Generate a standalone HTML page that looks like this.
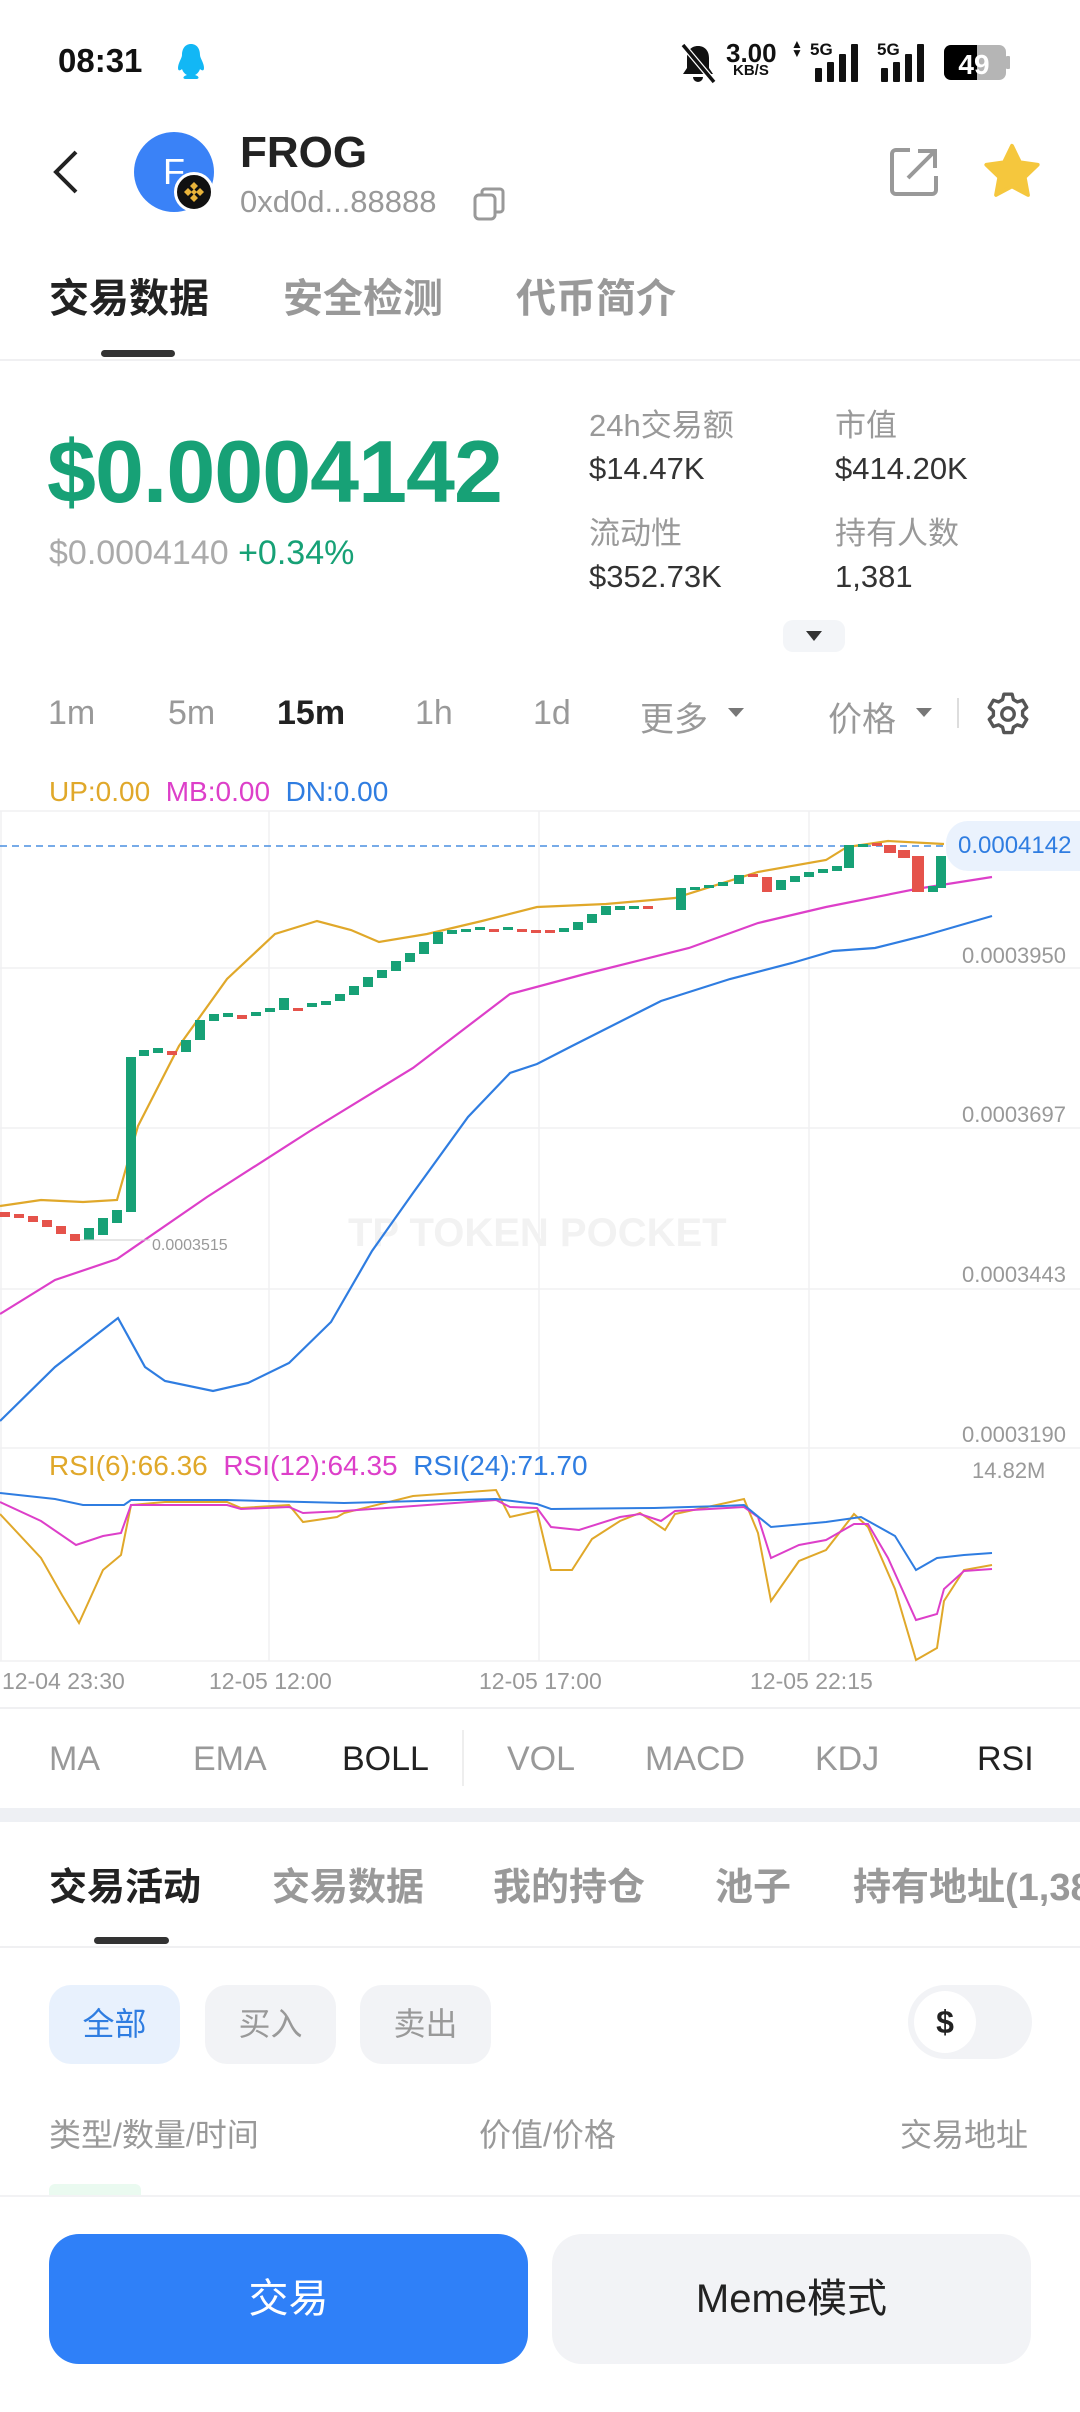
<!DOCTYPE html>
<html><head><meta charset="utf-8">
<style>
*{margin:0;padding:0;box-sizing:border-box}
body{width:1080px;height:2412px;background:#fff;position:relative;overflow:hidden;font-family:"Liberation Sans","Noto Sans CJK SC",sans-serif;color:#222}
.a{position:absolute;white-space:nowrap}
.lbl{color:#999;font-size:31px}
.val{color:#333;font-size:31px}
.iv{font-size:34px;color:#999;top:694px}
.ind{font-size:34px;color:#999;top:1740px}
.st{font-size:38px;font-weight:bold;color:#999;top:1856px}
.chip{position:absolute;top:1985px;height:79px;width:131px;border-radius:22px;background:#f2f3f6;color:#999;font-size:32px;text-align:center;line-height:79px}
.ax{font-size:22px;fill:#999;color:#999;font-family:"Liberation Sans",sans-serif}
</style></head><body>

<!-- status bar -->
<div class="a" style="left:58px;top:42px;font-size:33px;font-weight:bold;color:#111">08:31</div>
<svg class="a" style="left:176px;top:42px" width="30" height="40" viewBox="0 0 30 40"><path d="M15 2c-6 0-9 5-9 11 0 3-4 8-4 13 0 3 2 3 4 1 1 3 3 5 5 6-4 1-5 4-1 4h10c4 0 3-3-1-4 2-1 4-3 5-6 2 2 4 2 4-1 0-5-4-10-4-13 0-6-3-11-9-11z" fill="#12b7f5"/></svg>
<svg class="a" style="left:678px;top:42px" width="40" height="42" viewBox="0 0 40 42"><path d="M20 4c-7 0-11 5-11 12v10l-4 6h30l-4-6V16c0-7-4-12-11-12z M15 35a5 5 0 0010 0z" fill="#111"/><line x1="5" y1="3" x2="36" y2="40" stroke="#fff" stroke-width="6"/><line x1="5" y1="3" x2="36" y2="40" stroke="#111" stroke-width="3.5"/></svg>
<div class="a" style="left:726px;top:38px;font-size:26px;font-weight:bold;color:#111">3.00</div>
<div class="a" style="left:733px;top:62px;font-size:15px;font-weight:bold;color:#111">KB/S</div>
<div class="a" style="left:791px;top:40px;font-size:12px;color:#111;line-height:9px">▲<br>▼</div>
<div class="a" style="left:810px;top:40px;font-size:17px;font-weight:bold;color:#111">5G</div>
<svg class="a" style="left:815px;top:44px" width="48" height="38"><rect x="0" y="24" width="7" height="14" rx="1" fill="#111"/><rect x="12" y="18" width="7" height="20" rx="1" fill="#111"/><rect x="24" y="10" width="7" height="28" rx="1" fill="#111"/><rect x="36" y="0" width="7" height="38" rx="1" fill="#111"/></svg>
<div class="a" style="left:877px;top:40px;font-size:17px;font-weight:bold;color:#111">5G</div>
<svg class="a" style="left:881px;top:44px" width="48" height="38"><rect x="0" y="24" width="7" height="14" rx="1" fill="#111"/><rect x="12" y="18" width="7" height="20" rx="1" fill="#111"/><rect x="24" y="10" width="7" height="28" rx="1" fill="#111"/><rect x="36" y="0" width="7" height="38" rx="1" fill="#111"/></svg>
<svg class="a" style="left:944px;top:45px" width="66" height="36"><rect x="0" y="0" width="62" height="35" rx="7" fill="#b5b5b5"/><path d="M7 0h26v35H7a7 7 0 01-7-7V7a7 7 0 017-7z" fill="#000"/><rect x="62" y="11" width="4" height="13" rx="1" fill="#b5b5b5"/><text x="30" y="29" font-size="28" font-weight="bold" fill="#fff" text-anchor="middle" font-family="Liberation Sans">49</text></svg>

<!-- header -->
<svg class="a" style="left:50px;top:148px" width="30" height="48"><path d="M26 4L6 24l20 20" fill="none" stroke="#222" stroke-width="4"/></svg>
<div class="a" style="left:134px;top:132px;width:80px;height:80px;border-radius:50%;background:#3a82f7;color:#fff;font-size:36px;line-height:80px;text-align:center">F</div>
<div class="a" style="left:174px;top:172px;width:40px;height:40px;border-radius:50%;background:#111;border:3px solid #fff"></div>
<svg class="a" style="left:182px;top:180px" width="24" height="24" viewBox="0 0 24 24"><path d="M12 2l4 4-4 4-4-4zM6 8l4 4-4 4-4-4zM18 8l4 4-4 4-4-4zM12 14l4 4-4 4-4-4zM12 9l3 3-3 3-3-3z" fill="#e9b43a"/></svg>
<div class="a" style="left:240px;top:128px;font-size:44px;font-weight:bold;color:#222">FROG</div>
<div class="a" style="left:240px;top:184px;font-size:31px;color:#999">0xd0d...88888</div>
<svg class="a" style="left:472px;top:186px" width="36" height="36"><rect x="3" y="9" width="20" height="24" rx="4" fill="none" stroke="#999" stroke-width="3"/><path d="M10 9V6a3 3 0 013-3h15a3 3 0 013 3v17a3 3 0 01-3 3h-5" fill="none" stroke="#999" stroke-width="3"/></svg>
<svg class="a" style="left:888px;top:146px" width="52" height="52"><path d="M22 4H8a4 4 0 00-4 4v36a4 4 0 004 4h36a4 4 0 004-4V30" fill="none" stroke="#999" stroke-width="4"/><path d="M20 32L46 6M30 5h17v17" fill="none" stroke="#999" stroke-width="4"/></svg>
<svg class="a" style="left:982px;top:142px" width="60" height="60" viewBox="0 0 24 24"><path d="M12 1.5l3.2 6.6 7.1 1-5.2 5 1.3 7.1L12 17.8l-6.4 3.4 1.3-7.1-5.2-5 7.1-1z" fill="#f5c73d" stroke="#f5c73d" stroke-width="1.5" stroke-linejoin="round"/></svg>

<!-- tabs -->
<div class="a" style="left:49px;top:266px;font-size:40px;font-weight:bold;color:#222">交易数据</div>
<div class="a" style="left:283px;top:266px;font-size:40px;font-weight:bold;color:#999">安全检测</div>
<div class="a" style="left:516px;top:266px;font-size:40px;font-weight:bold;color:#999">代币简介</div>
<div class="a" style="left:101px;top:350px;width:74px;height:7px;border-radius:4px;background:#333"></div>
<div class="a" style="left:0;top:359px;width:1080px;height:2px;background:#f0f0f2"></div>

<!-- price -->
<div class="a" style="left:47px;top:421px;font-size:88px;font-weight:bold;color:#17a176;letter-spacing:-1px">$0.0004142</div>
<div class="a" style="left:49px;top:534px;font-size:34px;color:#aaa">$0.0004140 <span style="color:#17a176">+0.34%</span></div>
<div class="a lbl" style="left:589px;top:400px">24h交易额</div>
<div class="a val" style="left:589px;top:451px">$14.47K</div>
<div class="a lbl" style="left:835px;top:400px">市值</div>
<div class="a val" style="left:835px;top:451px">$414.20K</div>
<div class="a lbl" style="left:589px;top:508px">流动性</div>
<div class="a val" style="left:589px;top:559px">$352.73K</div>
<div class="a lbl" style="left:835px;top:508px">持有人数</div>
<div class="a val" style="left:835px;top:559px">1,381</div>
<div class="a" style="left:783px;top:620px;width:62px;height:32px;border-radius:10px;background:#f3f5f8"></div>
<svg class="a" style="left:805px;top:629px" width="18" height="14"><path d="M1 2h16l-8 10z" fill="#333"/></svg>

<!-- intervals -->
<div class="a iv" style="left:48px">1m</div>
<div class="a iv" style="left:168px">5m</div>
<div class="a iv" style="left:277px;color:#222;font-weight:bold">15m</div>
<div class="a iv" style="left:415px">1h</div>
<div class="a iv" style="left:533px">1d</div>
<div class="a iv" style="left:640px;top:692px">更多</div>
<svg class="a" style="left:727px;top:706px" width="18" height="14"><path d="M1 2h16l-8 9z" fill="#777"/></svg>
<div class="a iv" style="left:828px;top:692px">价格</div>
<svg class="a" style="left:915px;top:706px" width="18" height="14"><path d="M1 2h16l-8 9z" fill="#777"/></svg>
<div class="a" style="left:957px;top:698px;width:2px;height:30px;background:#ddd"></div>
<svg class="a" style="left:983px;top:689px" width="50" height="50" viewBox="0 0 24 24"><path d="M10 2.5h4l.6 2.6 1.9 1.1 2.5-.8 2 3.4-2 1.8v2.2l2 1.8-2 3.4-2.5-.8-1.9 1.1-.6 2.6h-4l-.6-2.6-1.9-1.1-2.5.8-2-3.4 2-1.8v-2.2l-2-1.8 2-3.4 2.5.8 1.9-1.1z" fill="none" stroke="#555" stroke-width="1.6" stroke-linejoin="round"/><circle cx="12" cy="12" r="3" fill="none" stroke="#555" stroke-width="1.6"/></svg>

<!-- legend -->
<div class="a" style="left:49px;top:776px;font-size:28px"><span style="color:#e0a82a">UP:0.00</span>&nbsp; <span style="color:#dd3fc9">MB:0.00</span>&nbsp; <span style="color:#2f7de1">DN:0.00</span></div>

<!-- chart -->
<svg class="a" style="left:0;top:0" width="1080" height="1720">
<g stroke="#f0f0f2" stroke-width="1.5">
<line x1="0" y1="811" x2="1080" y2="811"/><line x1="0" y1="968" x2="1080" y2="968"/><line x1="0" y1="1128" x2="1080" y2="1128"/><line x1="0" y1="1289" x2="1080" y2="1289"/><line x1="0" y1="1448" x2="1080" y2="1448"/><line x1="0" y1="1661" x2="1080" y2="1661"/>
<line x1="269" y1="811" x2="269" y2="1661"/><line x1="539" y1="811" x2="539" y2="1661"/><line x1="809" y1="811" x2="809" y2="1661"/><line x1="1" y1="811" x2="1" y2="1661"/>
</g>
<text x="348" y="1246" font-size="40" font-weight="bold" fill="#f2f2f2" font-family="Liberation Sans">TP TOKEN POCKET</text>
<line x1="0" y1="846" x2="946" y2="846" stroke="#4a8fe0" stroke-width="1.5" stroke-dasharray="7,5"/>
<polyline fill="none" stroke="#e0a82a" stroke-width="2.2" points="0,1206 41,1200 83,1202 117,1200 138,1126 179,1046 227,979 275,934 317,921 351,930 379,942 427,934 482,921 537,907 606,904 675,898 758,872 826,860 847,847 888,841 944,844"/>
<polyline fill="none" stroke="#dd3fc9" stroke-width="2.2" points="0,1314 55,1280 117,1259 207,1197 310,1131 413,1068 510,994 585,974 689,948 758,923 826,907 916,889 992,877"/>
<polyline fill="none" stroke="#2f7de1" stroke-width="2.2" points="0,1421 55,1367 118,1318 145,1367 165,1381 213,1391 248,1383 289,1363 331,1322 372,1251 413,1193 468,1117 510,1073 537,1064 572,1046 661,1001 730,979 792,963 833,951 875,948 923,936 992,916"/>
<g fill="#17a176">
<rect x="84" y="1228" width="10" height="12"/><rect x="98" y="1218" width="10" height="17"/><rect x="112" y="1210" width="10" height="13"/><rect x="126" y="1057" width="10" height="155"/><rect x="139" y="1050" width="10" height="6"/><rect x="153" y="1048" width="10" height="5"/><rect x="181" y="1040" width="10" height="12"/><rect x="195" y="1020" width="10" height="20"/><rect x="209" y="1014" width="10" height="7"/><rect x="223" y="1013" width="10" height="4"/><rect x="251" y="1012" width="10" height="4"/><rect x="265" y="1008" width="10" height="4"/><rect x="279" y="998" width="10" height="12"/><rect x="307" y="1003" width="10" height="4"/><rect x="321" y="1001" width="10" height="4"/><rect x="335" y="994" width="10" height="7"/><rect x="349" y="986" width="10" height="9"/><rect x="363" y="977" width="10" height="10"/><rect x="377" y="970" width="10" height="8"/><rect x="391" y="961" width="10" height="10"/><rect x="405" y="953" width="10" height="9"/><rect x="419" y="942" width="10" height="12"/><rect x="433" y="932" width="10" height="12"/><rect x="447" y="930" width="10" height="4"/><rect x="461" y="929" width="10" height="3"/><rect x="475" y="927" width="10" height="3"/><rect x="503" y="927" width="10" height="3"/><rect x="559" y="928" width="10" height="4"/><rect x="573" y="922" width="10" height="8"/><rect x="587" y="914" width="10" height="9"/><rect x="601" y="906" width="10" height="9"/><rect x="615" y="906" width="10" height="4"/><rect x="629" y="906" width="10" height="3"/><rect x="676" y="888" width="10" height="22"/><rect x="690" y="887" width="10" height="3"/><rect x="704" y="885" width="10" height="3"/><rect x="718" y="882" width="10" height="4"/><rect x="734" y="875" width="10" height="9"/><rect x="776" y="880" width="10" height="10"/><rect x="790" y="876" width="10" height="6"/><rect x="804" y="872" width="10" height="5"/><rect x="818" y="869" width="10" height="4"/><rect x="832" y="866" width="10" height="5"/><rect x="844" y="845" width="10" height="23"/><rect x="858" y="844" width="10" height="3"/><rect x="928" y="886" width="10" height="6"/><rect x="936" y="856" width="10" height="32"/>
</g>
<g fill="#e5534b">
<rect x="0" y="1212" width="10" height="5"/><rect x="14" y="1214" width="10" height="4"/><rect x="28" y="1216" width="10" height="6"/><rect x="42" y="1220" width="10" height="7"/><rect x="56" y="1226" width="10" height="8"/><rect x="70" y="1234" width="10" height="7"/><rect x="167" y="1051" width="10" height="4"/><rect x="237" y="1015" width="10" height="4"/><rect x="293" y="1008" width="10" height="3"/><rect x="489" y="929" width="10" height="3"/><rect x="517" y="929" width="10" height="3"/><rect x="531" y="930" width="10" height="3"/><rect x="545" y="930" width="10" height="3"/><rect x="643" y="906" width="10" height="3"/><rect x="748" y="874" width="10" height="3"/><rect x="762" y="877" width="10" height="15"/><rect x="872" y="843" width="10" height="3"/><rect x="884" y="845" width="12" height="8"/><rect x="898" y="850" width="12" height="8"/><rect x="912" y="856" width="12" height="36"/>
</g>
<line x1="80" y1="1240" x2="150" y2="1240" stroke="#ccc" stroke-width="1"/>
<text x="152" y="1250" font-size="16" fill="#999" font-family="Liberation Sans">0.0003515</text>
<text x="962" y="963" class="ax">0.0003950</text>
<text x="962" y="1122" class="ax">0.0003697</text>
<text x="962" y="1282" class="ax">0.0003443</text>
<text x="962" y="1442" class="ax">0.0003190</text>
<text x="972" y="1478" class="ax">14.82M</text>
<polyline fill="none" stroke="#e0a82a" stroke-width="2" points="0,1514 41,1558 62,1595 79,1623 103,1570 121,1555 131,1505 165,1502 227,1502 241,1508 289,1505 303,1522 337,1517 344,1513 413,1496 496,1490 510,1517 537,1511 551,1570 572,1570 592,1539 620,1521 640,1513 665,1530 675,1514 744,1499 758,1533 771,1601 799,1561 826,1550 854,1514 868,1527 895,1589 916,1660 937,1648 944,1601 964,1570 992,1565"/>
<polyline fill="none" stroke="#dd3fc9" stroke-width="2" points="0,1502 41,1521 76,1545 103,1536 121,1533 131,1505 227,1505 241,1509 289,1507 303,1513 344,1511 496,1500 510,1507 537,1508 551,1527 579,1530 620,1517 640,1514 661,1521 675,1511 744,1507 758,1517 771,1558 799,1545 826,1540 854,1524 868,1524 888,1558 916,1620 937,1614 944,1589 964,1571 992,1569"/>
<polyline fill="none" stroke="#2f7de1" stroke-width="2" points="0,1493 55,1499 83,1505 124,1505 131,1500 227,1500 344,1503 496,1499 537,1504 551,1509 654,1508 723,1506 744,1505 771,1527 826,1522 861,1517 895,1536 916,1570 937,1558 964,1555 992,1553"/>
</svg>
<div class="a" style="left:946px;top:821px;width:134px;height:50px;border-radius:22px 0 0 22px;background:#eaf2fd;color:#2f7de1;font-size:24px;line-height:50px;padding-left:12px">0.0004142</div>
<div class="a" style="left:49px;top:1450px;font-size:28px"><span style="color:#e0a82a">RSI(6):66.36</span>&nbsp; <span style="color:#dd3fc9">RSI(12):64.35</span>&nbsp; <span style="color:#2f7de1">RSI(24):71.70</span></div>
<div class="a" style="left:2px;top:1668px;font-size:23px;color:#999">12-04 23:30</div>
<div class="a" style="left:209px;top:1668px;font-size:23px;color:#999">12-05 12:00</div>
<div class="a" style="left:479px;top:1668px;font-size:23px;color:#999">12-05 17:00</div>
<div class="a" style="left:750px;top:1668px;font-size:23px;color:#999">12-05 22:15</div>
<div class="a" style="left:0;top:1707px;width:1080px;height:2px;background:#f0f0f2"></div>

<!-- indicators -->
<div class="a ind" style="left:49px">MA</div>
<div class="a ind" style="left:193px">EMA</div>
<div class="a ind" style="left:342px;color:#222">BOLL</div>
<div class="a" style="left:462px;top:1730px;width:2px;height:56px;background:#eee"></div>
<div class="a ind" style="left:507px">VOL</div>
<div class="a ind" style="left:645px">MACD</div>
<div class="a ind" style="left:815px">KDJ</div>
<div class="a ind" style="left:977px;color:#222">RSI</div>
<div class="a" style="left:0;top:1808px;width:1080px;height:14px;background:#eef0f4"></div>

<!-- section tabs -->
<div class="a st" style="left:49px;color:#222">交易活动</div>
<div class="a st" style="left:272px">交易数据</div>
<div class="a st" style="left:493px">我的持仓</div>
<div class="a st" style="left:715px">池子</div>
<div class="a st" style="left:853px">持有地址(1,381)</div>
<div class="a" style="left:94px;top:1937px;width:75px;height:7px;border-radius:4px;background:#333"></div>
<div class="a" style="left:0;top:1946px;width:1080px;height:2px;background:#f0f0f2"></div>

<div class="chip" style="left:49px;background:#e8f1fd;color:#2f7de1">全部</div>
<div class="chip" style="left:205px">买入</div>
<div class="chip" style="left:360px">卖出</div>
<div class="a" style="left:908px;top:1985px;width:124px;height:74px;border-radius:37px;background:#f2f3f6"></div>
<div class="a" style="left:914px;top:1991px;width:62px;height:62px;border-radius:50%;background:#fff;font-size:32px;font-weight:bold;line-height:62px;text-align:center;color:#222">$</div>

<div class="a" style="left:49px;top:2110px;font-size:32px;color:#999">类型/数量/时间</div>
<div class="a" style="left:479px;top:2110px;font-size:32px;color:#999">价值/价格</div>
<div class="a" style="left:900px;top:2110px;font-size:32px;color:#999">交易地址</div>
<div class="a" style="left:49px;top:2184px;width:92px;height:12px;border-radius:6px 6px 0 0;background:#eafaf0"></div>
<div class="a" style="left:0;top:2195px;width:1080px;height:2px;background:#f2f2f4"></div>

<!-- buttons -->
<div class="a" style="left:49px;top:2234px;width:479px;height:130px;border-radius:30px;background:#2f80f8;color:#fff;font-size:40px;text-align:center;line-height:130px">交易</div>
<div class="a" style="left:552px;top:2234px;width:479px;height:130px;border-radius:30px;background:#f2f3f6;color:#222;font-size:40px;text-align:center;line-height:130px">Meme模式</div>
</body></html>
